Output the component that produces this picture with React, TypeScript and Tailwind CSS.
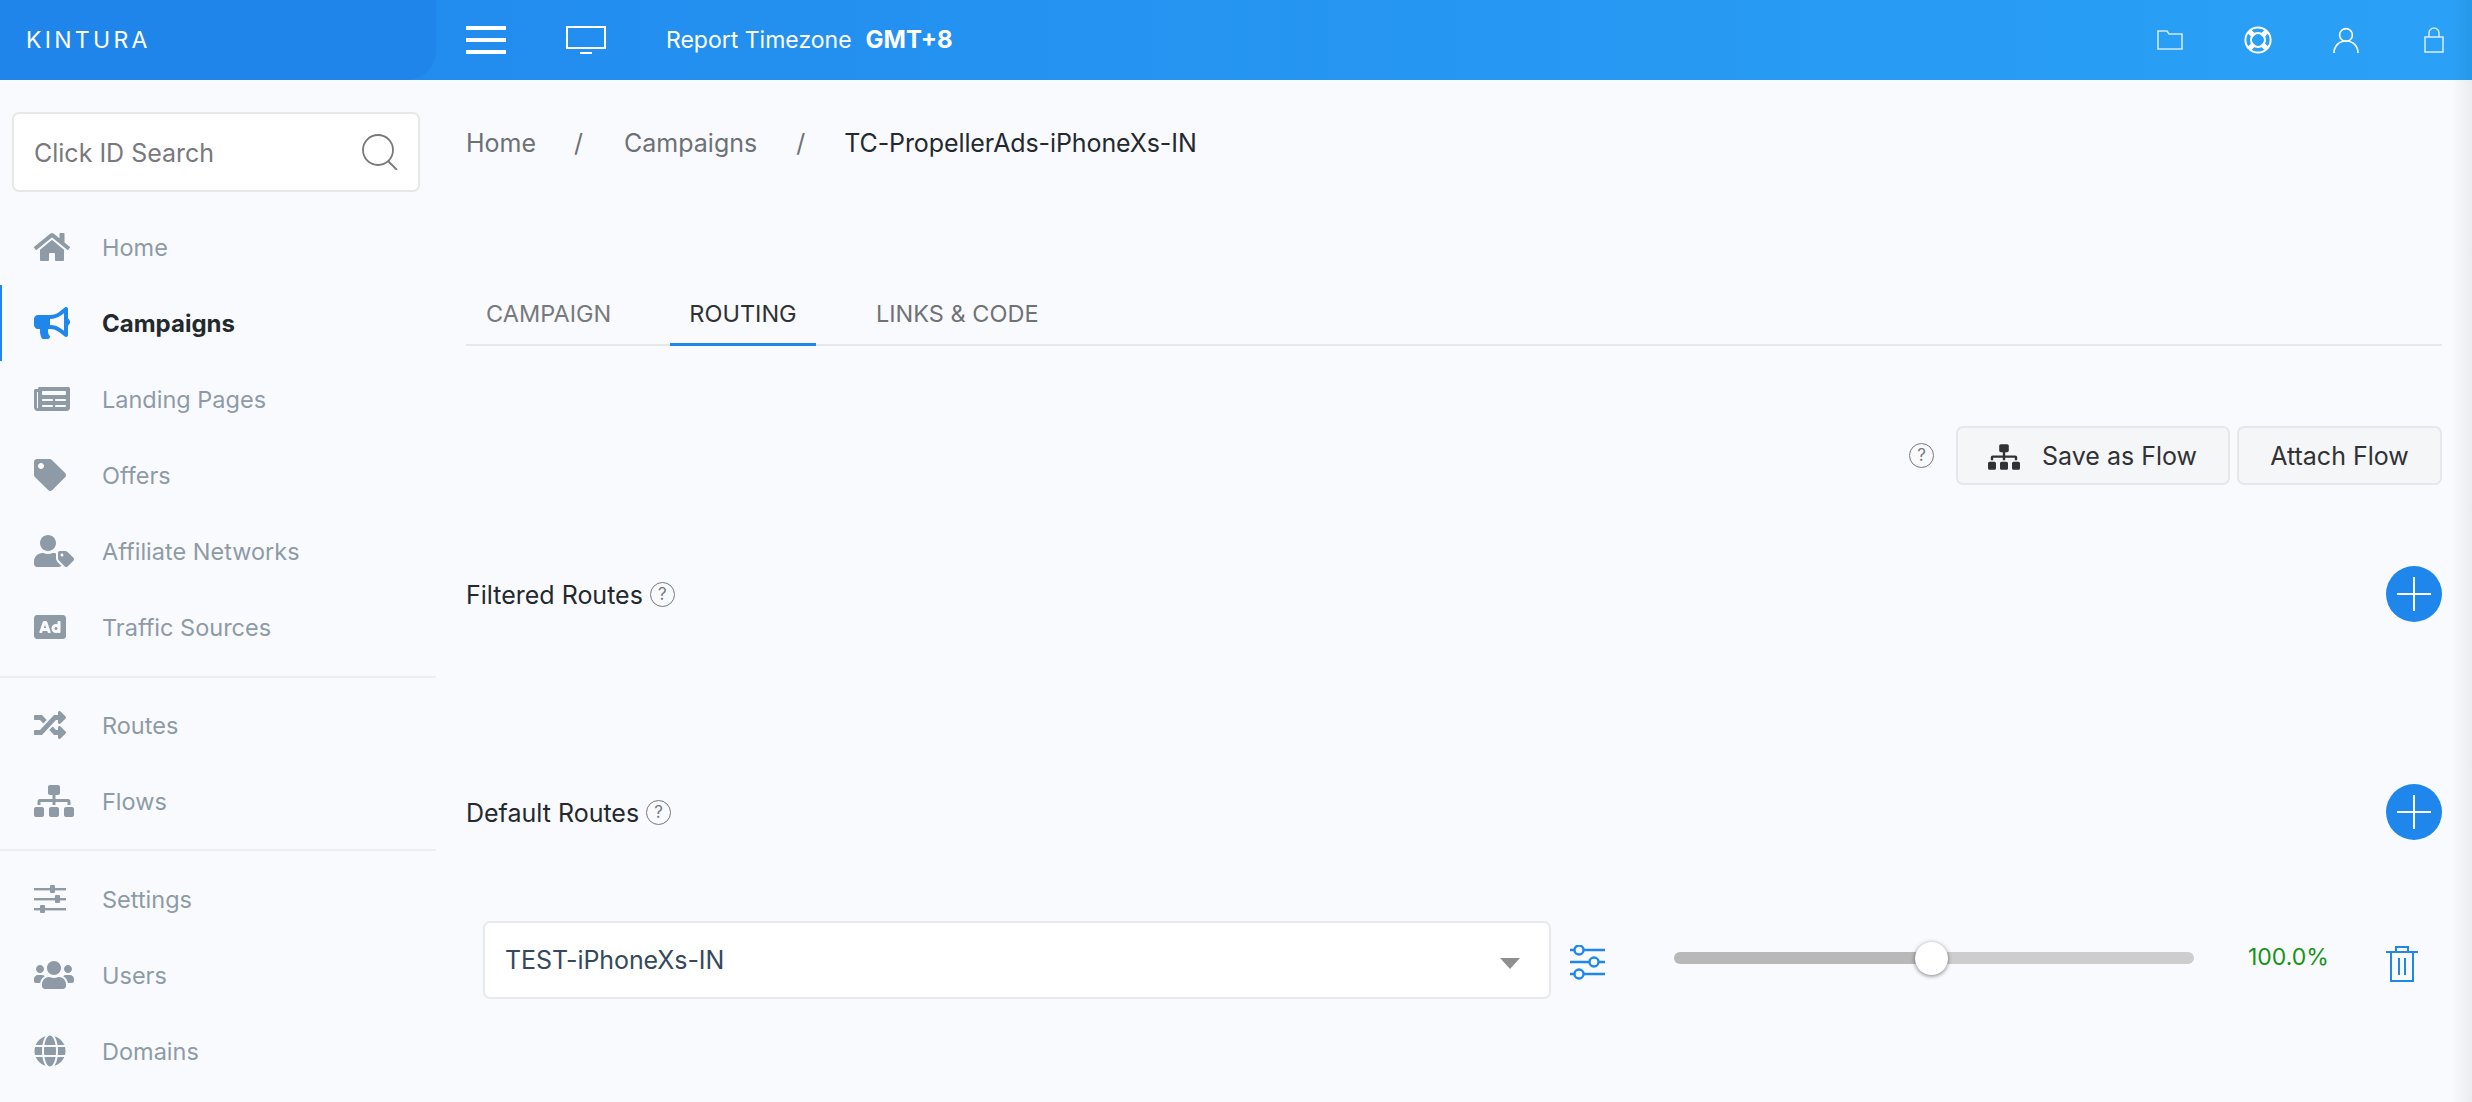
import type { ReactNode } from 'react'
import { FaAd, FaBullhorn, FaGlobe, FaHome, FaNewspaper, FaRandom, FaSitemap, FaTag, FaUserTag, FaUsers } from 'react-icons/fa'

interface NavItemProps {
  icon: ReactNode
  label: string
  active?: boolean
}

function NavItem({ icon, label, active }: NavItemProps) {
  return (
    <div className="relative flex h-[76px] items-center pl-[34px]">
      {active && <div className="absolute inset-y-0 left-0 w-[2px] bg-[#1f87ec]" />}
      <span className={`flex w-[68px] shrink-0 items-center ${active ? 'text-[#1f87ec]' : 'text-[#8e9aa6]'}`}>{icon}</span>
      <span className={active ? 'pt-[2px] text-[24px] font-bold text-[#24292e]' : 'pt-[2px] text-[23.5px] text-[#8e9aa6]'}>{label}</span>
    </div>
  )
}

function SlidersIcon({ className }: { className?: string }) {
  return (
    <svg viewBox="0 0 32 28" className={className} fill="currentColor">
      <rect x="0" y="3" width="32" height="2.4" />
      <rect x="0" y="13" width="32" height="2.4" />
      <rect x="0" y="23" width="32" height="2.4" />
      <rect x="16" y="0" width="5" height="8" rx="1" />
      <rect x="21" y="10" width="5" height="8" rx="1" />
      <rect x="6" y="20" width="5" height="8" rx="1" />
    </svg>
  )
}

function HelpIcon() {
  return (
    <span className="flex h-[25px] w-[25px] items-center justify-center rounded-full border border-[#77797c] text-[17px] leading-none text-[#77797c]">?</span>
  )
}

function PlusButton() {
  return (
    <div className="flex h-[56px] w-[56px] items-center justify-center rounded-full bg-[#1f87ec]">
      <svg viewBox="0 0 34 34" className="h-[34px] w-[34px]" stroke="#fff" strokeWidth="2">
        <path d="M17 0v34M0 17h34" />
      </svg>
    </div>
  )
}

export default function App() {
  return (
    <div className="relative flex h-[1102px] flex-col overflow-hidden bg-[#f9fafe] font-['Inter',sans-serif]">
      {/* Top bar */}
      <header className="flex h-[80px] shrink-0 items-center bg-[linear-gradient(90deg,#2088ed,#2aa1f6)] text-white">
        <div className="flex h-full w-[436px] shrink-0 items-center rounded-br-[30px] bg-[#1f85ea] pl-[26px]">
          <span className="text-[23px] font-normal tracking-[3.3px]">KINTURA</span>
        </div>
        <div className="ml-[30px] flex w-[40px] flex-col gap-[8px]">
          <div className="h-[4px] bg-white" />
          <div className="h-[4px] bg-white" />
          <div className="h-[4px] bg-white" />
        </div>
        <svg viewBox="0 0 40 28" className="ml-[60px] h-[28px] w-[40px]" fill="none" stroke="#fff" strokeWidth="2">
          <rect x="1" y="1" width="38" height="21" />
          <path d="M14 27h12" />
        </svg>
        <span className="ml-[60px] text-[23px]">Report Timezone</span>
        <span className="ml-[14px] text-[24px] font-bold">GMT+8</span>
        <div className="ml-auto flex items-center pr-[28px]">
          <svg viewBox="0 0 26 20" className="h-[20px] w-[26px]" fill="none" stroke="#cfe8fc" strokeWidth="1.6">
            <path d="M1 19V1h9l2 3h13v15z" />
          </svg>
          <svg viewBox="0 0 28 28" className="ml-[61px] h-[28px] w-[28px]" fill="none" stroke="#fff">
            <circle cx="14" cy="14" r="12.6" strokeWidth="2" />
            <circle cx="14" cy="14" r="7" strokeWidth="2" />
            <path d="M5 5l5 5M23 5l-5 5M5 23l5-5M23 23l-5-5" strokeWidth="5" />
          </svg>
          <svg viewBox="0 0 26 26" className="ml-[61px] h-[26px] w-[26px]" fill="none" stroke="#fff" strokeWidth="1.6">
            <circle cx="13" cy="8" r="6.4" />
            <path d="M1 26c0-7 5-12 12-12s12 5 12 12" />
          </svg>
          <svg viewBox="0 0 20 26" className="ml-[65px] h-[26px] w-[20px]" fill="none" stroke="#cfe8fc" strokeWidth="1.6">
            <rect x="1" y="10" width="18" height="15" />
            <path d="M5 10V6a5 5 0 0 1 10 0v4" />
          </svg>
        </div>
      </header>

      <div className="flex flex-1">
        {/* Sidebar */}
        <aside className="w-[436px] shrink-0">
          <div className="mx-[12px] mt-[32px] flex h-[80px] w-[408px] items-center justify-between rounded-[7px] border-2 border-[#e6e7e9] bg-white pl-[20px] pr-[20px]">
            <span className="pt-[3px] text-[25px] text-[#77797c]">Click ID Search</span>
            <svg viewBox="0 0 36 36" className="h-[36px] w-[36px]" fill="none" stroke="#77797c" strokeWidth="1.8">
              <circle cx="16" cy="16" r="15" />
              <path d="M26 27l9 9" />
            </svg>
          </div>
          <nav className="mt-[17px]">
            <NavItem icon={<FaHome className="h-[32px] w-[36px]" />} label="Home" />
            <NavItem active icon={<FaBullhorn className="h-[32px] w-[36px]" />} label="Campaigns" />
            <NavItem icon={<FaNewspaper className="h-[32px] w-[36px]" />} label="Landing Pages" />
            <NavItem icon={<FaTag className="h-[32px] w-[32px]" />} label="Offers" />
            <NavItem icon={<FaUserTag className="h-[32px] w-[40px]" />} label="Affiliate Networks" />
            <NavItem icon={<FaAd className="h-[32px] w-[32px]" />} label="Traffic Sources" />
            <div className="mb-[9px] mt-[11px] h-[2px] bg-[#eceef1]" />
            <NavItem icon={<FaRandom className="h-[32px] w-[32px]" />} label="Routes" />
            <NavItem icon={<FaSitemap className="h-[32px] w-[40px]" />} label="Flows" />
            <div className="my-[10px] h-[2px] bg-[#eceef1]" />
            <NavItem icon={<SlidersIcon className="h-[28px] w-[32px]" />} label="Settings" />
            <NavItem icon={<FaUsers className="h-[32px] w-[40px]" />} label="Users" />
            <NavItem icon={<FaGlobe className="h-[32px] w-[32px]" />} label="Domains" />
          </nav>
        </aside>

        {/* Main */}
        <main className="flex-1 pl-[30px] pr-[30px] pt-[49px]">
          <div className="flex h-[30px] items-center text-[25px] text-[#6d7175]">
            <span>Home</span>
            <span className="ml-[38px]">/</span>
            <span className="ml-[41px]">Campaigns</span>
            <span className="ml-[39px]">/</span>
            <span className="ml-[39px] tracking-[-0.1px] text-[#24292e]">TC-PropellerAds-iPhoneXs-IN</span>
          </div>

          <div className="mt-[121px] flex h-[66px] border-b-2 border-[#e5e7e9] text-[23.5px]">
            <div className="flex h-[66px] w-[204px] items-center pl-[20px] pt-[2px] text-[#77797c]">CAMPAIGN</div>
            <div className="flex h-[66px] w-[146px] items-center justify-center border-b-[3px] border-[#1f87ec] pt-[4px] text-[#2f3235]">ROUTING</div>
            <div className="flex h-[66px] items-center pl-[60px] pt-[2px] text-[#6f7276]">LINKS &amp; CODE</div>
          </div>

          <div className="mt-[80px] flex items-center justify-end">
            <HelpIcon />
            <button className="ml-[22px] flex h-[59px] w-[274px] items-center rounded-[7px] border-2 border-[#e6e7e9] bg-[#f5f6f8] pl-[30px] pt-[3px] text-[25px] text-[#303235]">
              <FaSitemap className="mr-[22px] h-[28px] w-[32px]" />
              Save as Flow
            </button>
            <button className="ml-[7px] flex h-[59px] w-[205px] items-center justify-center rounded-[7px] border-2 border-[#e6e7e9] bg-[#f5f6f8] pt-[3px] text-[25px] text-[#303235]">Attach Flow</button>
          </div>

          <div className="mt-[81px] flex h-[56px] items-center justify-between">
            <div className="flex items-center gap-[7px] text-[25px] text-[#24292e]">
              <span className="pt-[3px]">Filtered Routes</span>
              <HelpIcon />
            </div>
            <PlusButton />
          </div>

          <div className="mt-[162px] flex h-[56px] items-center justify-between">
            <div className="flex items-center gap-[7px] text-[25px] text-[#24292e]">
              <span className="pt-[3px]">Default Routes</span>
              <HelpIcon />
            </div>
            <PlusButton />
          </div>

          <div className="ml-[17px] mt-[81px] flex items-center">
            <div className="flex h-[78px] w-[1068px] items-center justify-between rounded-[7px] border-2 border-[#e8e9eb] bg-white pl-[20px] pr-[29px]">
              <span className="pt-[2px] text-[25px] tracking-[-0.1px] text-[#34495e]">TEST-iPhoneXs-IN</span>
              <span className="mt-[6px] h-0 w-0 border-x-[10px] border-t-[11px] border-x-transparent border-t-[#8f8f8f]" />
            </div>
            <svg viewBox="0 0 35 36" className="ml-[19px] mt-[6px] h-[36px] w-[35px]" fill="none" stroke="#1f87ec" strokeWidth="2.4">
              <path d="M0 5h4M14 5h21M0 17h19M29 17h6M0 29h4M14 29h21" />
              <circle cx="9" cy="5" r="4.5" />
              <circle cx="24" cy="17" r="4.5" />
              <circle cx="9" cy="29" r="4.5" />
            </svg>
            <div className="relative mb-[4px] ml-[69px] flex h-[12px] w-[520px]">
              <div className="h-full w-1/2 rounded-l-[6px] bg-[#b8b8b8]" />
              <div className="h-full w-1/2 rounded-r-[6px] bg-[#cdcdcd]" />
              <div className="absolute left-[241px] top-[-10px] h-[33px] w-[33px] rounded-full bg-white shadow-[0_1px_4px_rgba(0,0,0,0.5)]" />
            </div>
            <span className="mb-[6px] ml-[54px] w-[80px] text-[23px] text-[#169416]">100.0%</span>
            <svg viewBox="0 0 32 36" className="ml-[58px] mt-[8px] h-[36px] w-[32px]" fill="none" stroke="#1f87ec" strokeWidth="2">
              <path d="M0 6h32M5 6v29h22V6M10 5V1h12v4M13 12v17M19 12v17" />
            </svg>
          </div>
        </main>
      </div>

      {/* Scrollbar edge shading */}
      <div className="pointer-events-none absolute inset-y-0 right-0 w-[20px] bg-[linear-gradient(90deg,rgba(0,0,0,0),rgba(0,0,0,0.06))]" />
    </div>
  )
}
